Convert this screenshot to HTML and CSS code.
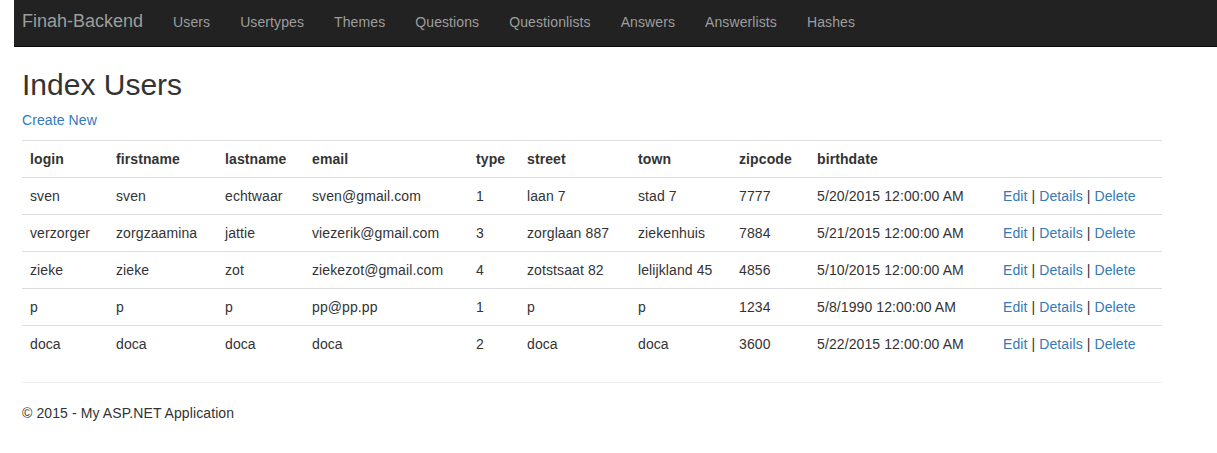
FILE: index.html
```html
<!DOCTYPE html>
<html>
<head>
<meta charset="utf-8">
<title>Index Users</title>
<link rel="stylesheet" href="styles.css">
</head>
<body>
<nav class="navbar">
  <a class="brand" href="#">Finah-Backend</a>
  <ul class="nav">
    <li><a href="#">Users</a></li>
    <li><a href="#">Usertypes</a></li>
    <li><a href="#">Themes</a></li>
    <li><a href="#">Questions</a></li>
    <li><a href="#">Questionlists</a></li>
    <li><a href="#">Answers</a></li>
    <li><a href="#">Answerlists</a></li>
    <li><a href="#">Hashes</a></li>
  </ul>
</nav>
<main class="container">
  <h2 class="title">Index Users</h2>
  <p class="create"><a href="#">Create New</a></p>
  <table class="table">
    <colgroup>
      <col class="c-login"><col class="c-first"><col class="c-last"><col class="c-email"><col class="c-type"><col class="c-street"><col class="c-town"><col class="c-zip"><col class="c-birth"><col class="c-act">
    </colgroup>
    <tr>
      <th>login</th><th>firstname</th><th>lastname</th><th>email</th><th>type</th><th>street</th><th>town</th><th>zipcode</th><th>birthdate</th><th></th>
    </tr>
    <tr>
      <td>sven</td><td>sven</td><td>echtwaar</td><td>sven@gmail.com</td><td>1</td><td>laan 7</td><td>stad 7</td><td>7777</td><td>5/20/2015 12:00:00 AM</td>
      <td><a href="#">Edit</a> | <a href="#">Details</a> | <a href="#">Delete</a></td>
    </tr>
    <tr>
      <td>verzorger</td><td>zorgzaamina</td><td>jattie</td><td>viezerik@gmail.com</td><td>3</td><td>zorglaan 887</td><td>ziekenhuis</td><td>7884</td><td>5/21/2015 12:00:00 AM</td>
      <td><a href="#">Edit</a> | <a href="#">Details</a> | <a href="#">Delete</a></td>
    </tr>
    <tr>
      <td>zieke</td><td>zieke</td><td>zot</td><td>ziekezot@gmail.com</td><td>4</td><td>zotstsaat 82</td><td>lelijkland 45</td><td>4856</td><td>5/10/2015 12:00:00 AM</td>
      <td><a href="#">Edit</a> | <a href="#">Details</a> | <a href="#">Delete</a></td>
    </tr>
    <tr>
      <td>p</td><td>p</td><td>p</td><td>pp@pp.pp</td><td>1</td><td>p</td><td>p</td><td>1234</td><td>5/8/1990 12:00:00 AM</td>
      <td><a href="#">Edit</a> | <a href="#">Details</a> | <a href="#">Delete</a></td>
    </tr>
    <tr>
      <td>doca</td><td>doca</td><td>doca</td><td>doca</td><td>2</td><td>doca</td><td>doca</td><td>3600</td><td>5/22/2015 12:00:00 AM</td>
      <td><a href="#">Edit</a> | <a href="#">Details</a> | <a href="#">Delete</a></td>
    </tr>
  </table>
  <hr class="rule">
  <footer class="footer">
    <p>&copy; 2015 - My ASP.NET Application</p>
  </footer>
</main>
</body>
</html>
```
FILE: styles.css
```css
* { box-sizing: border-box; }
html, body { margin: 0; padding: 0; }
body {
  font-family: "Liberation Sans", Arial, Helvetica, sans-serif;
  font-size: 14px;
  line-height: 20px;
  letter-spacing: 0.1px;
  color: #333;
  background: #fff;
}
a { color: #337ab7; text-decoration: none; }

.navbar {
  margin-left: 14px;
  height: 47px;
  background: #222;
  border-bottom: 1px solid #080808;
  display: flex;
  align-items: flex-start;
  padding-left: 8px;
}
.brand {
  color: #9d9d9d;
  font-size: 18px;
  line-height: 20px;
  letter-spacing: 0;
  padding: 11px 15px 0 0;
}
.nav {
  list-style: none;
  margin: 0;
  padding: 0;
  display: flex;
}
.nav a {
  display: block;
  color: #9d9d9d;
  padding: 12px 15px 0;
  line-height: 20px;
}

.container {
  width: 1184px;
  padding: 0 22px;
}
.title {
  font-size: 30px;
  font-weight: 500;
  line-height: 33px;
  letter-spacing: 0;
  margin: 21px 0 9px;
}
.create { margin: 0 0 10px; }

.table {
  width: 1140px;
  table-layout: fixed;
  border-collapse: collapse;
  margin-bottom: 20px;
}
.table th, .table td {
  padding: 8px;
  line-height: 20px;
  text-align: left;
  vertical-align: top;
  border-top: 1px solid #ddd;
  white-space: nowrap;
}
.table th { font-weight: bold; }
.c-login { width: 86px; }
.c-first { width: 109px; }
.c-last { width: 87px; }
.c-email { width: 164px; }
.c-type { width: 51px; }
.c-street { width: 111px; }
.c-town { width: 101px; }
.c-zip { width: 78px; }
.c-birth { width: 186px; }
.c-act { width: 167px; }

.rule {
  width: 1140px;
  margin: 0 0 20px;
  border: 0;
  border-top: 1px solid #eee;
}
.footer p { margin: 0 0 10px; }
```
